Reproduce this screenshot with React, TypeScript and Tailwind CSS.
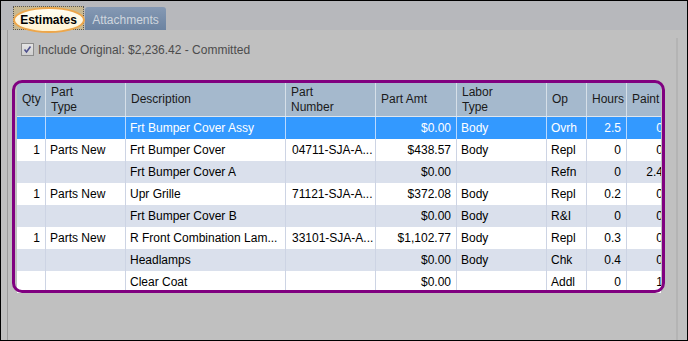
import React from "react";

const cols = [
  { w: "w-[29px]", label: ["Qty"], right: true },
  { w: "w-[80px]", label: ["Part", "Type"], right: false },
  { w: "w-[160px]", label: ["Description"], right: false },
  { w: "w-[90px]", label: ["Part", "Number"], right: false },
  { w: "w-[81px]", label: ["Part Amt"], right: true },
  { w: "w-[90px]", label: ["Labor", "Type"], right: false },
  { w: "w-[40px]", label: ["Op"], right: false },
  { w: "w-[40px]", label: ["Hours"], right: true },
  { w: "w-[42px]", label: ["Paint"], right: true },
];

const rows = [
  ["", "", "Frt Bumper Cover Assy", "", "$0.00", "Body", "Ovrh", "2.5", "0"],
  ["1", "Parts New", "Frt Bumper Cover", "04711-SJA-A...", "$438.57", "Body", "Repl", "0", "0"],
  ["", "", "Frt Bumper Cover A", "", "$0.00", "", "Refn", "0", "2.4"],
  ["1", "Parts New", "Upr Grille", "71121-SJA-A...", "$372.08", "Body", "Repl", "0.2", "0"],
  ["", "", "Frt Bumper Cover B", "", "$0.00", "Body", "R&I", "0", "0"],
  ["1", "Parts New", "R Front Combination Lam...", "33101-SJA-A...", "$1,102.77", "Body", "Repl", "0.3", "0"],
  ["", "", "Headlamps", "", "$0.00", "Body", "Chk", "0.4", "0"],
  ["", "", "Clear Coat", "", "$0.00", "", "Addl", "0", "1"],
];

const App = () => {
  return (
    <div className="relative w-[688px] h-[341px] border border-black bg-[#c0c0c0] flex flex-col overflow-hidden font-['Liberation_Sans',Arial,sans-serif] text-[12px]">
      {/* tab strip */}
      <div className="h-[29px] shrink-0 bg-[#b7b8bc] flex items-end pl-[12px]">
        <div className="relative w-[71px] h-[24px] bg-[#c9b991] border border-dotted border-[#555]">
          <span className="absolute left-[-1px] top-[0px] w-[72px] h-[26px] rounded-[50%] border-2 border-[#eda64a] bg-gradient-to-b from-[#fffdf3] to-[#fff2d2]" />
          <span className="relative z-10 flex h-full items-center justify-center font-bold text-black pt-[3px]">
            Estimates
          </span>
        </div>
        <div className="ml-[1px] w-[81px] h-[23px] pt-[2px] rounded-t-[3px] bg-gradient-to-b from-[#8599b4] to-[#6c83a1] flex items-center justify-center text-[#cfd6de]">
          Attachments
        </div>
      </div>

      {/* panel */}
      <div className="flex-1 ml-[6px] border-l border-[#9c9c9c]">
        <div className="mt-[8px] w-[670px] h-full border-r-2 border-r-[#b4b4b4]">
          <div className="flex items-center pt-[5px] pl-[13px] h-[18px]">
            <span className="w-[13px] h-[13px] border border-[#8c8c8c] bg-gradient-to-b from-[#e4e4e4] to-[#cfcfcf] flex items-center justify-center">
              <svg width="9" height="9" viewBox="0 0 9 9">
                <path d="M1.5 4.5 L3.5 7 L7.5 1.5" fill="none" stroke="#4d4f8c" strokeWidth="1.6" />
              </svg>
            </span>
            <span className="ml-[4px] text-[#4c4c4c]">Include Original: $2,236.42 - Committed</span>
          </div>

          {/* grid viewport */}
          <div className="mt-[27px] ml-[9px] w-[644px] h-[210px] overflow-hidden">
            <div className="flex w-max h-[34px] bg-[#a5b9cd] border-b border-[#dfe6ee] text-[#1a1a1a]">
              {cols.map((c, i) => (
                <div
                  key={i}
                  className={`${c.w} shrink-0 h-full border-r border-[#d6dfe8] pl-[5px] flex flex-col justify-center leading-[15px] whitespace-nowrap overflow-hidden`}
                >
                  {c.label.map((l) => (
                    <span key={l}>{l}</span>
                  ))}
                </div>
              ))}
            </div>
            {rows.map((r, ri) => {
              const sel = ri === 0;
              const bg = sel ? "bg-[#3399ff] text-white" : ri % 2 === 1 ? "bg-white text-black" : "bg-[#dae0ec] text-black";
              return (
                <div key={ri} className={`flex w-max h-[22px] ${bg}`}>
                  {cols.map((c, ci) => (
                    <div
                      key={ci}
                      className={`${c.w} shrink-0 h-full border-r ${sel ? "border-[#b9d9ff]" : "border-[#cdd4e4]"} flex items-center whitespace-nowrap overflow-hidden ${c.right ? "justify-end pr-[5px]" : ci === 3 ? "pl-[6px]" : "pl-[4px]"}`}
                    >
                      {r[ci]}
                    </div>
                  ))}
                </div>
              );
            })}
          </div>
        </div>
      </div>

      {/* purple highlight */}
      <div className="absolute left-[11px] top-[79px] w-[653px] h-[213px] rounded-[10px] border-[3px] border-[#800080] pointer-events-none" />
    </div>
  );
};

export default App;
